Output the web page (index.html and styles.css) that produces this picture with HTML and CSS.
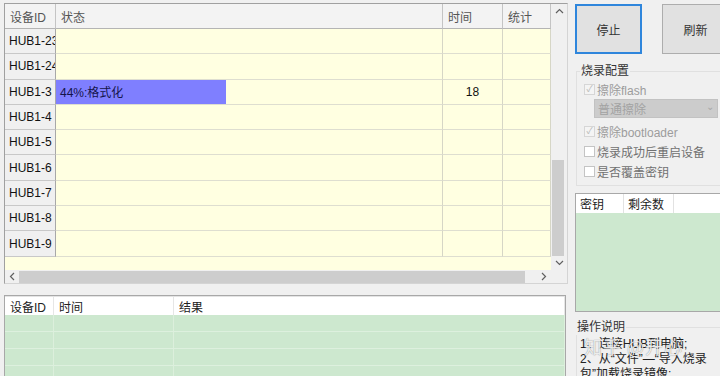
FILE: index.html
```html
<!DOCTYPE html>
<html lang="zh-CN">
<head>
  <meta charset="UTF-8">
  <title>烧录工具</title>
  <link rel="stylesheet" href="styles.css">
</head>
<body>
  <div class="app">
    <div class="left">
      <div class="grid-box">
        <div class="grid-view">
          <div class="hcell">设备ID</div>
          <div class="hcell">状态</div>
          <div class="hcell">时间</div>
          <div class="hcell">统计</div>

          <div class="rcell">HUB1-23</div><div class="cell"></div><div class="cell"></div><div class="cell"></div>
          <div class="rcell">HUB1-24</div><div class="cell"></div><div class="cell"></div><div class="cell"></div>
          <div class="rcell">HUB1-3</div>
          <div class="cell"><div class="progress">44%:格式化</div></div>
          <div class="cell num">18</div>
          <div class="cell"></div>
          <div class="rcell">HUB1-4</div><div class="cell"></div><div class="cell"></div><div class="cell"></div>
          <div class="rcell">HUB1-5</div><div class="cell"></div><div class="cell"></div><div class="cell"></div>
          <div class="rcell">HUB1-6</div><div class="cell"></div><div class="cell"></div><div class="cell"></div>
          <div class="rcell">HUB1-7</div><div class="cell"></div><div class="cell"></div><div class="cell"></div>
          <div class="rcell">HUB1-8</div><div class="cell"></div><div class="cell"></div><div class="cell"></div>
          <div class="rcell">HUB1-9</div><div class="cell"></div><div class="cell"></div><div class="cell"></div>
        </div>

        <div class="vscroll">
          <div class="arrow">
            <svg width="9" height="6" viewBox="0 0 9 6"><path d="M1 5 L4.5 1.5 L8 5" fill="none" stroke="#606060" stroke-width="1.2"/></svg>
          </div>
          <div class="track"></div>
          <div class="vthumb"></div>
          <div class="arrow">
            <svg width="9" height="6" viewBox="0 0 9 6"><path d="M1 1 L4.5 4.5 L8 1" fill="none" stroke="#606060" stroke-width="1.2"/></svg>
          </div>
        </div>

        <div class="hscroll">
          <div class="arrow">
            <svg width="6" height="9" viewBox="0 0 6 9"><path d="M5 1 L1.5 4.5 L5 8" fill="none" stroke="#606060" stroke-width="1.2"/></svg>
          </div>
          <div class="hthumb"></div>
          <div class="track"></div>
          <div class="arrow">
            <svg width="6" height="9" viewBox="0 0 6 9"><path d="M1 1 L4.5 4.5 L1 8" fill="none" stroke="#606060" stroke-width="1.2"/></svg>
          </div>
        </div>

        <div class="corner"></div>
      </div>

      <div class="log-box">
        <div class="log-head">
          <div>设备ID</div>
          <div>时间</div>
          <div>结果</div>
        </div>
        <div class="log-row"><div></div><div></div><div></div></div>
        <div class="log-row"><div></div><div></div><div></div></div>
        <div class="log-row"><div></div><div></div><div></div></div>
        <div class="log-row"><div></div><div></div><div></div></div>
      </div>
    </div>

    <div class="right">
      <div class="btn-row">
        <div class="btn focus">停止</div>
        <div class="btn">刷新</div>
      </div>

      <fieldset class="group">
        <legend>烧录配置</legend>
        <div class="check disabled"><span class="box">&#10003;</span>擦除flash</div>
        <div class="combo">普通擦除<span class="caret">&#8964;</span></div>
        <div class="check disabled"><span class="box">&#10003;</span>擦除bootloader</div>
        <div class="check"><span class="box"></span>烧录成功后重启设备</div>
        <div class="check"><span class="box"></span>是否覆盖密钥</div>
      </fieldset>

      <div class="key-box">
        <div class="key-head">
          <div>密钥</div>
          <div>剩余数</div>
          <div></div>
        </div>
      </div>

      <fieldset class="group help">
        <legend>操作说明</legend>
        <p>1、连接HUB到电脑;</p>
        <p>2、从“文件”—“导入烧录</p>
        <p>包”加载烧录镜像;</p>
      </fieldset>
    </div>

    <div class="watermark">知乎 @开心</div>
  </div>
</body>
</html>
```

FILE: styles.css
```css
* {
  box-sizing: border-box;
}

body {
  margin: 0;
  background-color: #f0f0f0;
  font-family: "Liberation Sans", "Noto Sans CJK SC", sans-serif;
  font-size: 12px;
  color: #222;
}

.app {
  position: relative;
  width: 720px;
  height: 376px;
  overflow: hidden;
  display: grid;
  grid-template-columns: 570px 150px;
}

/* left side: device grid + log */

.left {
  padding: 3px 0 0 4px;
}

.grid-box {
  width: 564px;
  height: 281px;
  border: 1px solid #a0a0a0;
  border-right-color: #d4d4d4;
  border-bottom-color: #d4d4d4;
  display: grid;
  grid-template-columns: 546px 16px;
  grid-template-rows: 266px 13px;
  background-color: #f0f0f0;
}

.grid-view {
  display: grid;
  grid-template-columns: 51px 387px 60px 48px;
  grid-template-rows: 25px repeat(9, 25.3px);
  align-content: start;
  background-color: #ffffe1;
  overflow: hidden;
}

.hcell {
  background-color: #f3f3f3;
  border-right: 1px solid #c4c4c4;
  border-bottom: 1px solid #b4b4b4;
  color: #555;
  padding: 0 5px;
  display: flex;
  align-items: center;
}

.rcell {
  background-color: #f0f0f0;
  border-right: 1px solid #a8a8a8;
  border-bottom: 1px solid #c8c8c8;
  padding: 0 4px;
  display: flex;
  align-items: center;
  white-space: nowrap;
  overflow: hidden;
  color: #111;
}

.cell {
  border-right: 1px solid #d6d6c6;
  border-bottom: 1px solid #deded0;
  display: flex;
  align-items: stretch;
}

.cell.num {
  align-items: center;
  justify-content: center;
  color: #111;
}

.progress {
  width: 170px;
  background-color: #7f7fff;
  color: #14144a;
  padding: 0 4px;
  display: flex;
  align-items: center;
}

.vscroll {
  display: flex;
  flex-direction: column;
  background-color: #f0f0f0;
  padding-left: 1px;
}

.vscroll .arrow {
  height: 14px;
  display: flex;
  align-items: center;
  justify-content: center;
}

.vscroll .track {
  flex: 1;
}

.vthumb {
  height: 96px;
  margin: 0 3px 0 0;
  background-color: #cdcdcd;
}

.hscroll {
  display: flex;
  background-color: #f0f0f0;
}

.hscroll .arrow {
  width: 14px;
  display: flex;
  align-items: center;
  justify-content: center;
}

.hthumb {
  width: 506px;
  margin: 1px 0 0 0;
  background-color: #cdcdcd;
}

.hscroll .track {
  flex: 1;
}

.corner {
  background-color: #f0f0f0;
}

.log-box {
  width: 562px;
  height: 90px;
  margin-top: 11px;
  border: 1px solid #a8a8a8;
  border-bottom: none;
  background-color: #cde8cf;
}

.log-head,
.log-row {
  display: grid;
  grid-template-columns: 49px 120px 1fr;
}

.log-head {
  height: 19px;
  background-color: #fff;
  border-top: 1px solid #e4e4e4;
}

.log-head div {
  border-right: 1px solid #e6e6e6;
  padding: 0 5px;
  display: flex;
  align-items: center;
  color: #222;
}

.log-row {
  height: 17px;
}

.log-row div {
  border-right: 1px solid #dcefdc;
  border-bottom: 1px solid #ddf0de;
}

/* right side: buttons + config */

.right {
  padding: 4px 0 0 5px;
}

.btn-row {
  display: flex;
  gap: 20px;
}

.btn {
  flex: none;
  width: 67px;
  height: 50px;
  background-color: #e1e1e1;
  border: 1px solid #adadad;
  display: flex;
  align-items: center;
  justify-content: center;
  color: #333;
}

.btn.focus {
  border: 2px solid #2f86dc;
}

.group {
  width: 170px;
  margin: 9px 0 0 1px;
  padding: 0 0 4px 7px;
  border: 1px solid #e0e0e0;
  border-right: none;
}

.group legend {
  margin-left: -4px;
  padding: 0 1px;
  line-height: 16px;
  color: #333;
}

.check {
  height: 20px;
  display: flex;
  align-items: center;
  color: #707070;
  white-space: nowrap;
}

.check.disabled {
  color: #9c9c9c;
}

.box {
  width: 11px;
  height: 11px;
  margin-right: 2px;
  border: 1px solid #c4c4c4;
  background-color: #fff;
  display: flex;
  align-items: center;
  justify-content: center;
  font-size: 9px;
  line-height: 1;
}

.check.disabled .box {
  border-color: #d6d6d6;
  background-color: #f4f4f4;
  color: #b8b8b8;
}

.combo {
  width: 124px;
  height: 19px;
  margin: 0 0 3px 10px;
  padding: 0 3px;
  background-color: #cccccc;
  border: 1px solid #c2c2c2;
  color: #a2a2a2;
  display: flex;
  align-items: center;
  justify-content: space-between;
}

.caret {
  font-size: 10px;
  color: #a8a8a8;
  line-height: 1;
  padding-bottom: 4px;
}

.key-box {
  width: 160px;
  height: 119px;
  margin-top: 7px;
  border: 1px solid #a8a8a8;
  background-color: #cde8cf;
}

.key-head {
  height: 19px;
  display: grid;
  grid-template-columns: 48px 50px 1fr;
  background-color: #fff;
}

.key-head div {
  border-right: 1px solid #e2e2e2;
  padding: 0 4px;
  display: flex;
  align-items: center;
}

.help {
  margin-top: 7px;
  padding: 2px 0 0 3px;
}

.help p {
  margin: 0;
  line-height: 15px;
  white-space: nowrap;
  color: #222;
}

.watermark {
  position: absolute;
  left: 584px;
  top: 333px;
  font-family: "Noto Sans CJK SC", sans-serif;
  font-size: 18px;
  color: rgba(255, 255, 255, 0.85);
  text-shadow: 0 0 1px rgba(0, 0, 0, 0.5);
  letter-spacing: 1px;
}
```
